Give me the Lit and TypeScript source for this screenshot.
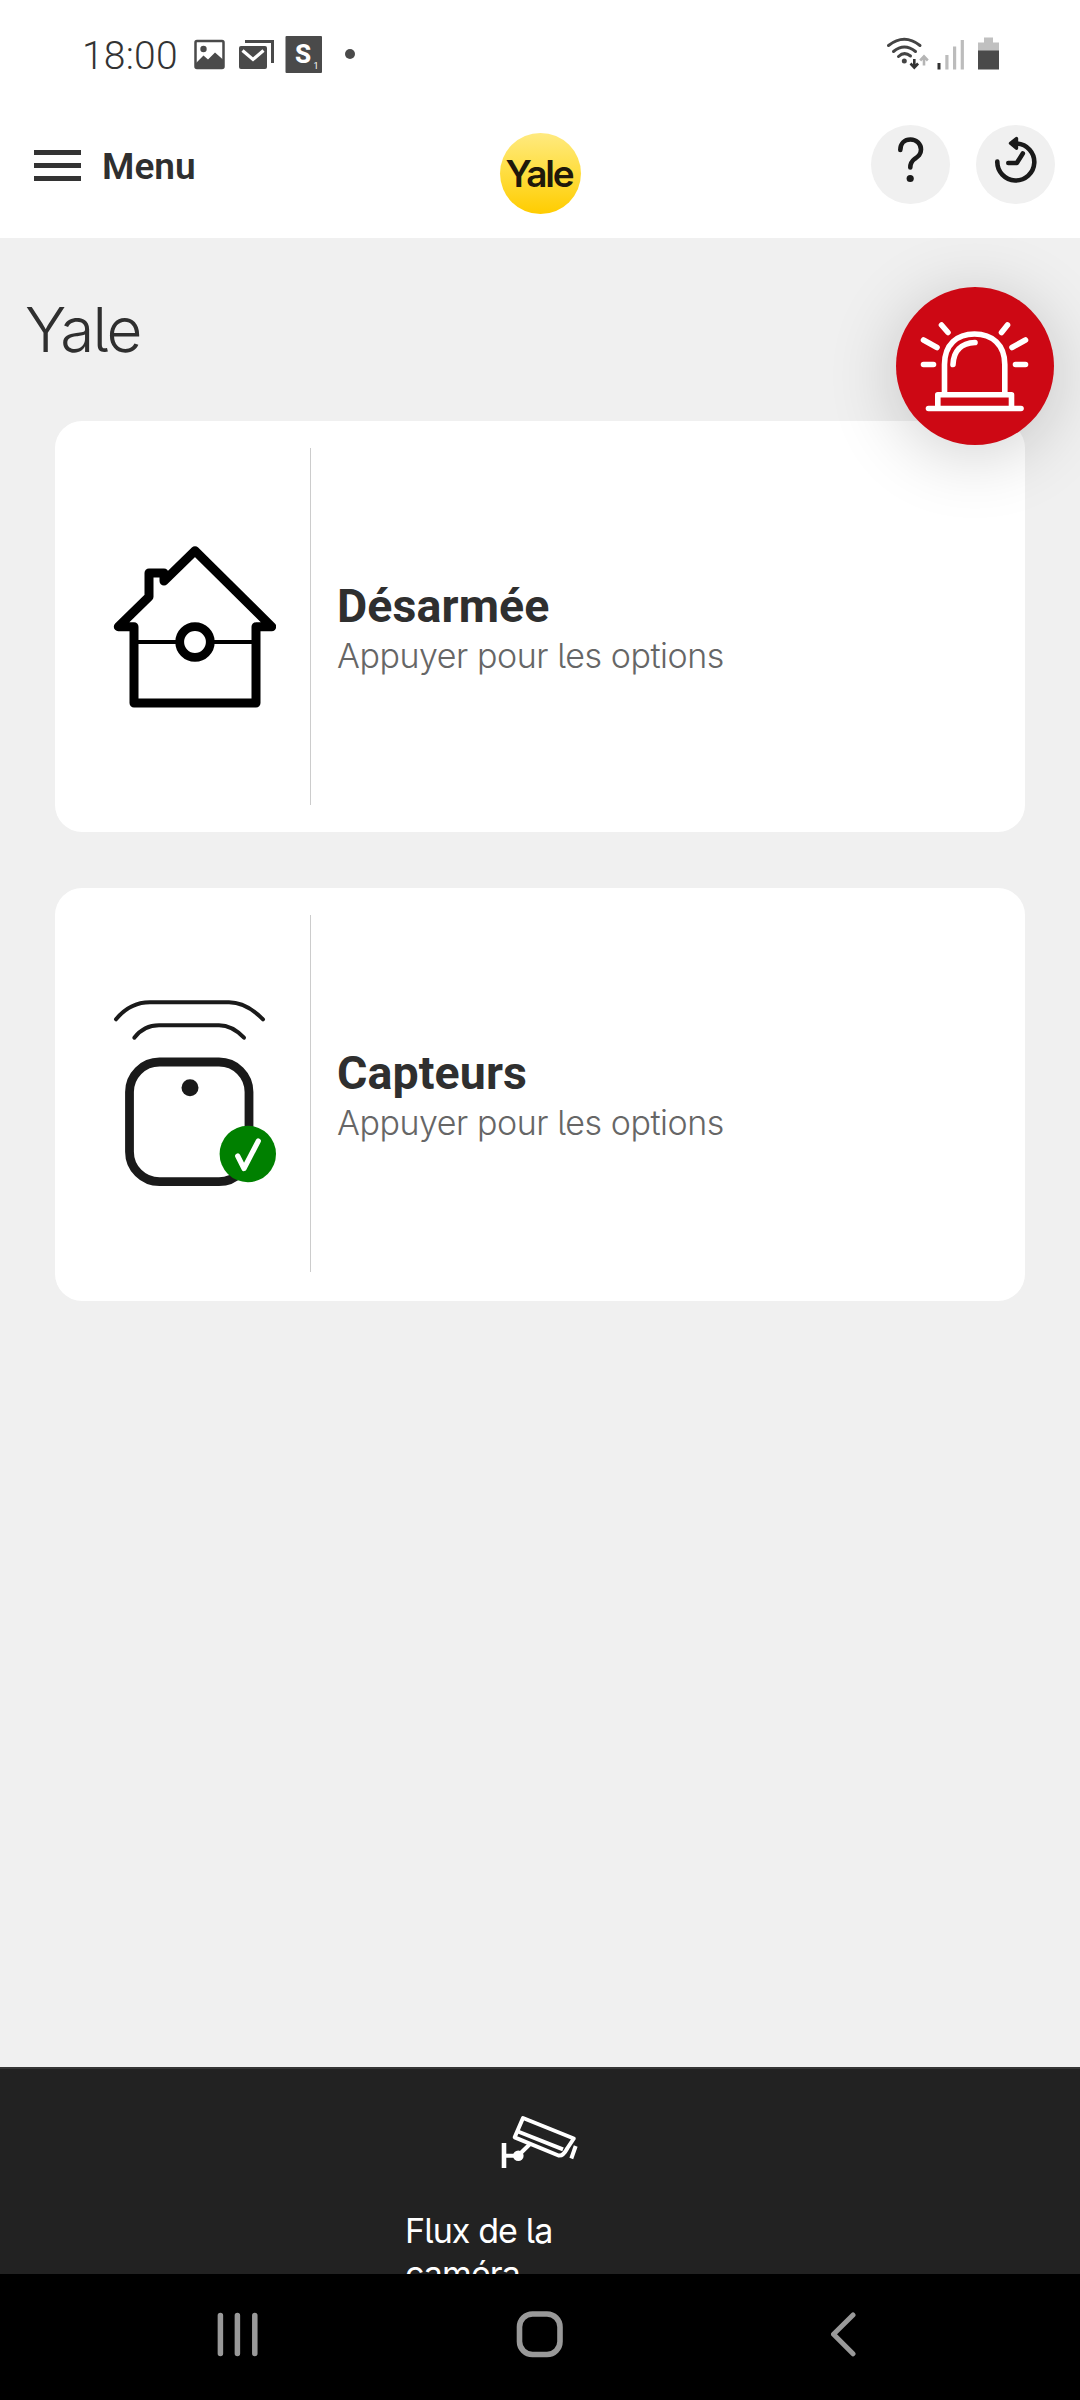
import { LitElement, html, css, svg } from "lit";
import { customElement } from "lit/decorators.js";

const houseIcon = svg`
  <g fill="none" stroke="#000" stroke-linejoin="round" stroke-linecap="round">
    <path stroke-width="9" d="M164 581 V573 H149 V596.7 L118.3 626.7 H134 V703 H256 V626.7 H271.7 L195 550.7 Z"/>
    <path stroke-width="4" d="M136 642 H178 M212 642 H254"/>
    <circle cx="195" cy="642" r="15.3" stroke-width="8.8"/>
  </g>`;

const sensorIcon = svg`
  <g fill="none" stroke="#1a1a1a" stroke-linecap="round">
    <path stroke-width="4" d="M116 1019.3 Q130 1002.3 150 1002.3 H229 Q246 1002.3 263 1019.3"/>
    <path stroke-width="4" d="M134.3 1037.7 Q144 1025.3 159 1025.3 H219 Q232 1025.3 244 1037.7"/>
    <rect x="129.5" y="1062" width="119.5" height="119.7" rx="30" stroke-width="8.8"/>
  </g>
  <circle cx="190" cy="1087.7" r="8.5" fill="#1a1a1a"/>
  <circle cx="247.8" cy="1154" r="28.2" fill="#008000"/>
  <path d="M237.7 1156 L244 1168.5 L258.3 1141" fill="none" stroke="#fff" stroke-width="5.2" stroke-linecap="round" stroke-linejoin="round"/>`;

const cards = [
  { title: "Désarmée", hint: "Appuyer pour les options", icon: houseIcon, box: "110 421 166 411", cls: "first" },
  { title: "Capteurs", hint: "Appuyer pour les options", icon: sensorIcon, box: "110 888 166 413", cls: "second" },
];

@customElement("app-root")
export class AppRoot extends LitElement {
  static styles = css`
    :host { display: block; }
    * { box-sizing: border-box; }
    svg { display: block; flex: none; }
    .screen {
      position: relative; width: 1080px; height: 2400px; overflow: hidden;
      display: flex; flex-direction: column; background: #f0f0f0;
      font-family: Roboto, "Liberation Sans", sans-serif; color: #2f2f2f;
    }
    .status {
      height: 108px; flex: none; background: #fff; position: relative; z-index: 2;
      display: flex; justify-content: space-between; padding: 0 80px 0 82px;
    }
    .left { display: flex; }
    .clock {
      width: 108px; padding-top: 26px; font-size: 39px; line-height: 60px; font-weight: 300;
      color: #333; white-space: nowrap; letter-spacing: 0.2px;
    }
    .header {
      height: 130px; flex: none; background: #fff; position: relative; z-index: 2;
      display: grid; grid-template-columns: 1fr 81px 1fr; align-items: center;
    }
    .menu { display: flex; align-items: center; gap: 21px; padding: 0 0 15px 34px; }
    .bars { display: flex; flex-direction: column; gap: 8px; width: 47px; }
    .bar { height: 5px; background: #333; }
    .menu-label { font-size: 37px; line-height: 44px; font-weight: 600; padding-top: 2px; }
    .logo {
      width: 81px; height: 81px; border-radius: 50%; display: flex; align-items: center; justify-content: center;
      background: linear-gradient(#ffea80, #ffdf45 45%, #fc0); margin-top: 1px;
      color: #20180a; font-size: 37px; line-height: 44px; font-weight: 600; letter-spacing: -2.2px; text-indent: -2px;
      font-family: Inter, Roboto, sans-serif;
    }
    .actions { display: flex; justify-content: flex-end; gap: 26px; padding: 0 25px 17px 0; }
    .round { width: 79px; height: 79px; border-radius: 50%; background: #f0f0f0; }
    .main { height: 1829px; flex: none; padding: 0 55px 0 55px; display: flex; flex-direction: column; }
    .title {
      margin: 0 0 0 -30px; padding-top: 42px; height: 183px; font-size: 62px; line-height: 100px; font-weight: 350;
      font-family: Inter, Roboto, sans-serif; font-feature-settings: "cv05"; letter-spacing: -1.7px;
    }
    .card { display: flex; background: #fff; border-radius: 27px; flex: none; padding: 0 0 0 55px; }
    .card.first { height: 411px; margin-bottom: 56px; }
    .card.second { height: 413px; }
    .rule { width: 1px; margin: 27px 26px 27px 34px; background: #ccc; }
    .second .rule { margin-bottom: 29px; }
    .texts { display: flex; flex-direction: column; justify-content: center; padding-top: 9px; }
    .second .texts { padding-top: 7px; }
    .name { font-size: 46.5px; line-height: 50px; font-weight: 700; white-space: nowrap; letter-spacing: 0.1px; }
    .hint {
      font-size: 34px; line-height: 50px; font-weight: 300; color: #666; white-space: nowrap; letter-spacing: -0.45px;
      font-family: Inter, Roboto, sans-serif; font-feature-settings: "cv05";
    }
    .fab {
      position: absolute; left: 896px; top: 286.5px; width: 158px; height: 158px; border-radius: 50%;
      background: #cd0814; box-shadow: 0 10px 70px rgba(0, 0, 0, 0.19); z-index: 1;
    }
    .footer {
      height: 207px; flex: none; overflow: hidden; background: #222; border-top: 2px solid #353535;
      display: flex; flex-direction: column; align-items: center; color: #fff; position: relative; z-index: 2;
    }
    .camera { margin-top: 41px; }
    .feed {
      width: 270px; margin-top: 35px; font-size: 34px; line-height: 43px; font-weight: 400; white-space: nowrap;
      font-family: Inter, Roboto, sans-serif; font-feature-settings: "cv05"; letter-spacing: -0.9px;
    }
    .nav { flex: 1; background: #000; display: grid; grid-template-columns: 300px 321px 40px; align-items: start; padding: 30px 0 0 210px; position: relative; z-index: 2; }
  `;

  render() {
    return html`
      <div class="screen">
        <div class="status">
          <div class="left">
            <div class="clock">18:00</div>
            <svg width="170" height="108" viewBox="190 0 170 108">
              <rect x="195.500" y="41" width="28" height="27" rx="1.500" fill="#fff" stroke="#4a4a4a" stroke-width="2.500"/>
              <circle cx="203.500" cy="49" r="3.200" fill="#4a4a4a"/>
              <path d="M196 63 L203.500 55.500 L208 59.500 L215 52.500 L223.500 60 V68 H196 Z" fill="#4a4a4a"/>
              <path d="M245 41.500 H272.500 V63" fill="none" stroke="#4a4a4a" stroke-width="3"/>
              <rect x="239" y="46" width="28" height="23" rx="2" fill="#4a4a4a"/>
              <path d="M242.500 50.500 L253 59.500 L263.500 50.500" fill="none" stroke="#fff" stroke-width="3.200"/>
              <rect x="285.500" y="36" width="36.500" height="37" rx="1" fill="#4a4a4a"/>
              <text x="303" y="63" text-anchor="middle" font-family="Roboto" font-weight="800" font-size="26" fill="#fff">S</text>
              <text x="316" y="69" text-anchor="middle" font-family="Roboto" font-size="9" fill="#fff">1</text>
              <circle cx="350" cy="54" r="5" fill="#4a4a4a"/>
            </svg>
          </div>
          <svg width="120" height="108" viewBox="880 0 120 108">
            <g fill="none" stroke="#444" stroke-width="3" stroke-linecap="round">
              <path d="M888.500 45.500 Q904.300 33 920 45.500"/>
              <path d="M893.500 51.500 Q904.300 42.500 915.500 51.500"/>
              <path d="M898.500 56.500 Q904.300 51 910.500 56"/>
            </g>
            <circle cx="904.300" cy="61" r="2.500" fill="#444"/>
            <path d="M914.300 59 V67 M910.500 63.500 L914.300 67.500 L918.100 63.500" fill="none" stroke="#333" stroke-width="2.600"/>
            <path d="M924 65.500 V57.500 M920.200 60.500 L924 56.500 L927.800 60.500" fill="none" stroke="#b5b5b5" stroke-width="2.600"/>
            <rect x="937.500" y="63" width="3" height="6.500" fill="#333"/>
            <rect x="945.300" y="55" width="3.200" height="14.500" fill="#bcbcbc"/>
            <rect x="953" y="46.500" width="3.200" height="23" fill="#bcbcbc"/>
            <rect x="960.700" y="40" width="3.200" height="29.500" fill="#bcbcbc"/>
            <path d="M978 51 V42.500 H984 V37.500 H993 V42.500 H999 V51 Z" fill="#c0c0c0"/>
            <rect x="978" y="50.500" width="21" height="19" fill="#4a4a4a"/>
          </svg>
        </div>
        <div class="header">
          <div class="menu">
            <div class="bars"><div class="bar"></div><div class="bar"></div><div class="bar"></div></div>
            <div class="menu-label">Menu</div>
          </div>
          <div class="logo">Yale</div>
          <div class="actions">
            <svg class="round" viewBox="871 125.500 79 79">
              <path d="M900.300 150.500 C900.300 144 904.500 140 910.500 140 C916.500 140 921 144.500 921 150 C921 155 918 157 914.500 159.500 C911.500 161.800 910.300 163.500 910.300 168" fill="none" stroke="#1a1a1a" stroke-width="4.600" stroke-linecap="round"/>
              <circle cx="910.200" cy="179" r="3.600" fill="#1a1a1a"/>
            </svg>
            <svg class="round" viewBox="976 125.500 79 79">
              <g fill="none" stroke="#1a1a1a" stroke-width="4.600" stroke-linecap="round" stroke-linejoin="round">
                <path d="M997.300 162 A18.500 18.500 0 1 0 1017 144"/>
                <path d="M1008.300 163.500 H1016.800 L1022.800 154"/>
              </g>
              <path d="M1010.500 143.800 L1016.500 139 V148.800 Z" fill="#1a1a1a" stroke="#1a1a1a" stroke-width="3.400" stroke-linejoin="round"/>
            </svg>
          </div>
        </div>
        <div class="main">
          <h1 class="title">Yale</h1>
          ${cards.map(
            (c) => html`
              <div class="card ${c.cls}">
                <svg width="166" height=${c.cls === "first" ? 411 : 413} viewBox=${c.box}>${c.icon}</svg>
                <div class="rule"></div>
                <div class="texts">
                  <div class="name">${c.title}</div>
                  <div class="hint">${c.hint}</div>
                </div>
              </div>`
          )}
        </div>
        <div class="fab">
          <svg width="158" height="158" viewBox="896 286.500 158 158" fill="none" stroke="#fff" stroke-width="5.600" stroke-linecap="round" stroke-linejoin="round">
            <path d="M944.500 392 V364 C944.500 344 957 333.500 974.500 333.500 C992 333.500 1004.800 344 1004.800 364 V392"/>
            <path d="M953 364 C953.500 351 961 342.500 975 342"/>
            <path d="M937.800 407 V394.300 H1011.500 V407"/>
            <path d="M928.500 408 H1021" />
            <path d="M923.500 364 H933.500 M1015.500 364 H1025.500 M923.500 339.500 L937 347 M1025.500 339.500 L1012 347 M941.500 324.500 L948 332 M1007.500 324.500 L1001.500 332"/>
          </svg>
        </div>
        <div class="footer">
          <svg class="camera" width="80" height="64" viewBox="500 2110 80 64" fill="none" stroke="#fff" stroke-width="4" stroke-linejoin="round">
            <path d="M504 2143 V2168" stroke-width="4.600"/>
            <path d="M504 2155.700 H518 L529.500 2144.500"/>
            <circle cx="518.300" cy="2155.700" r="5.300" fill="#fff" stroke="none"/>
            <path d="M523 2118 L573.800 2138.500 L567.500 2148 Q563 2156.500 558.500 2155.500 L514.700 2137.300 Z"/>
            <path d="M516.700 2131 L563 2149.300"/>
            <path d="M575.700 2146 L571.300 2158.500"/>
          </svg>
          <div class="feed">Flux de la<br>caméra</div>
        </div>
        <div class="nav">
          <svg width="56" height="60" viewBox="210 2304 56 60" stroke="#999" stroke-width="5.500" stroke-linecap="round">
            <path d="M220.400 2315.500 V2353.500 M237.400 2315.500 V2353.500 M254.800 2315.500 V2353.500"/>
          </svg>
          <svg width="60" height="60" viewBox="510 2304 60 60">
            <rect x="519.500" y="2314" width="40.500" height="40.500" rx="13" fill="none" stroke="#999" stroke-width="5.600"/>
          </svg>
          <svg width="40" height="60" viewBox="831 2304 40 60">
            <path d="M853 2315 L833.500 2334.300 L853 2353.800" fill="none" stroke="#999" stroke-width="5" stroke-linecap="round" stroke-linejoin="round"/>
          </svg>
        </div>
      </div>
    `;
  }
}
